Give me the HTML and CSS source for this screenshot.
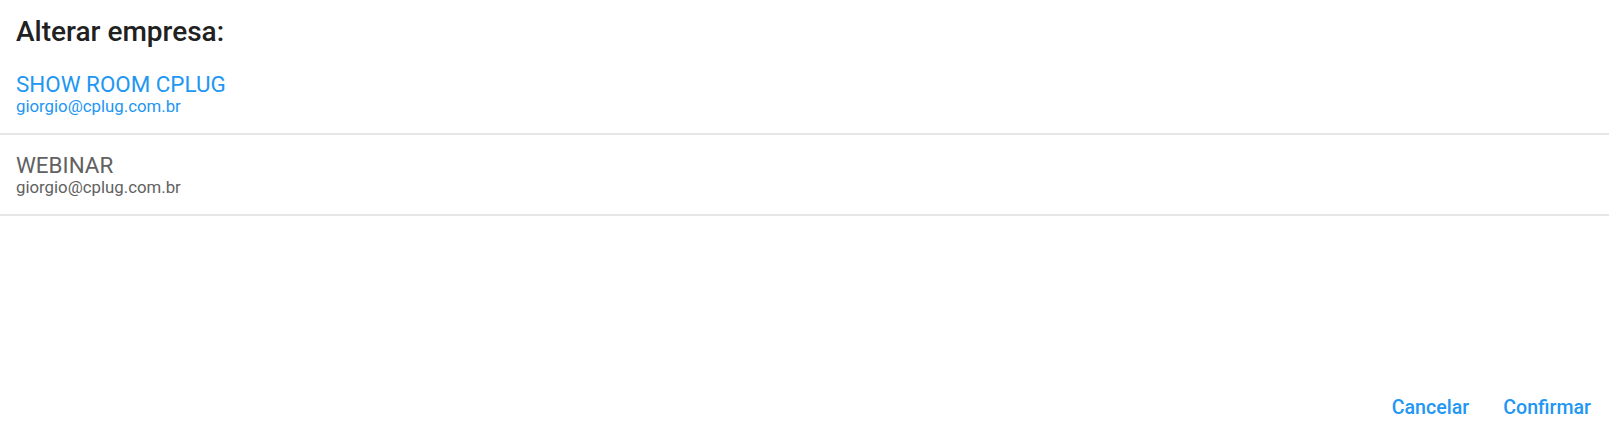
FILE: index.html
```html
<!DOCTYPE html>
<html lang="pt-BR">
<head>
<meta charset="utf-8">
<title>Alterar empresa</title>
<link rel="stylesheet" href="styles.css">
</head>
<body>
<div class="dialog">
  <h2 class="title">Alterar empresa:</h2>
  <ul class="list">
    <li class="item selected">
      <div class="name">SHOW ROOM CPLUG</div>
      <div class="email">giorgio@cplug.com.br</div>
    </li>
    <li class="item">
      <div class="name">WEBINAR</div>
      <div class="email">giorgio@cplug.com.br</div>
    </li>
  </ul>
  <div class="actions">
    <button class="btn">Cancelar</button>
    <button class="btn">Confirmar</button>
  </div>
</div>
</body>
</html>
```

FILE: styles.css
```css
html, body {
  margin: 0;
  padding: 0;
  background: #fff;
  height: 100%;
}
body {
  font-family: Roboto, "Liberation Sans", sans-serif;
}
.dialog {
  height: 444px;
  display: flex;
  flex-direction: column;
  box-sizing: border-box;
}
.title {
  margin: 0;
  padding: 16px 16px 0;
  font-size: 28px;
  font-weight: 500;
  line-height: 32px;
  color: #212121;
}
.list {
  list-style: none;
  margin: 6px 0 0;
  padding: 0;
  flex: 1;
}
.item {
  padding: 19px 16px 18px;
  border-bottom: 2px solid #e6e6e6;
  color: #616161;
}
.item.selected {
  color: #2196f3;
}
.name {
  font-size: 22.4px;
  line-height: 22px;
}
.email {
  margin-top: 2px;
  font-size: 16.8px;
  line-height: 18px;
}
.actions {
  display: flex;
  justify-content: flex-end;
  gap: 34px;
  padding: 0 18px 24px;
}
.btn {
  border: none;
  background: none;
  font-family: Roboto, "Liberation Sans", sans-serif;
  font-size: 19.6px;
  font-weight: 500;
  line-height: 24px;
  color: #2196f3;
  padding: 0;
  cursor: pointer;
}
```
